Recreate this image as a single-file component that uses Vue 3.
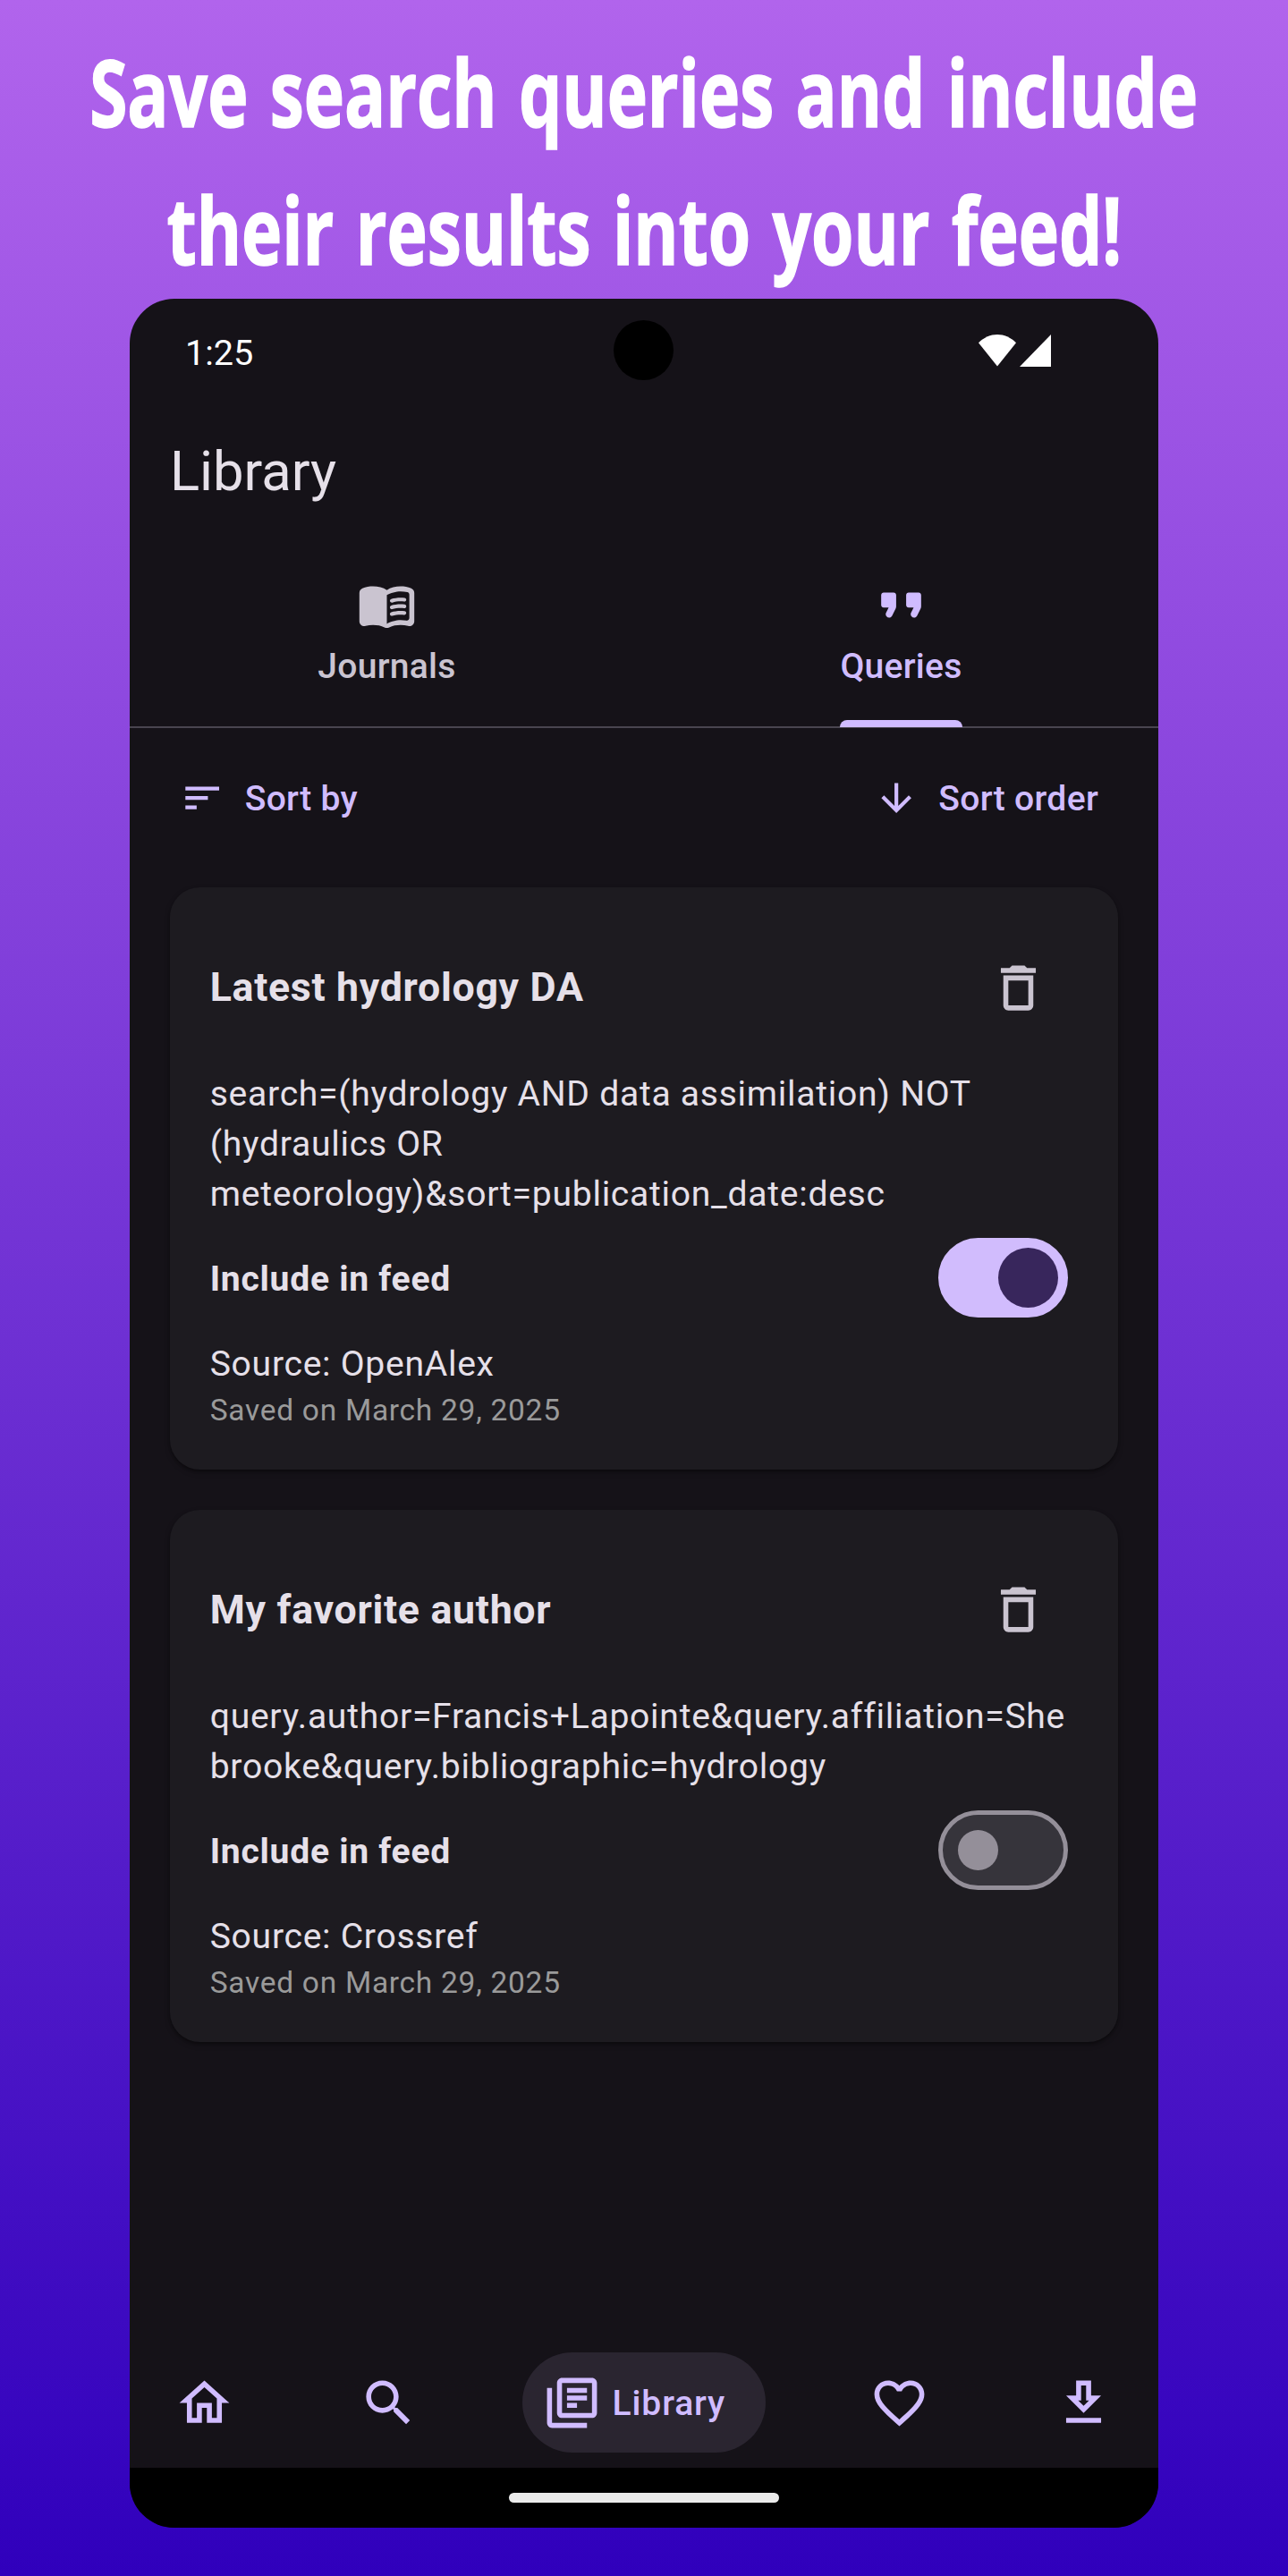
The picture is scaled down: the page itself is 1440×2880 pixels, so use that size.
<script setup>
import { ref } from 'vue'

const headline = ['Save search queries and include', 'their results into your feed!']

const queries = ref([
  {
    title: 'Latest hydrology DA',
    lines: [
      'search=(hydrology AND data assimilation) NOT',
      '(hydraulics OR',
      'meteorology)&sort=publication_date:desc',
    ],
    included: true,
    source: 'OpenAlex',
    saved: 'March 29, 2025',
  },
  {
    title: 'My favorite author',
    lines: [
      'query.author=Francis+Lapointe&query.affiliation=She',
      'brooke&query.bibliographic=hydrology',
    ],
    included: false,
    source: 'Crossref',
    saved: 'March 29, 2025',
  },
])

const nav = [
  {
    name: 'Home',
    path: 'M12 5.69l5 4.5V18h-2v-6H9v6H7v-7.81l5-4.5M12 3L2 12h3v8h6v-6h2v6h6v-8h3L12 3z',
  },
  {
    name: 'Search',
    path: 'M15.5 14h-.79l-.28-.27C15.41 12.59 16 11.11 16 9.5 16 5.91 13.09 3 9.5 3S3 5.91 3 9.5 5.91 16 9.5 16c1.61 0 3.09-.59 4.23-1.57l.27.28v.79l5 4.99L20.49 19l-4.99-5zm-6 0C7.01 14 5 11.99 5 9.5S7.01 5 9.5 5 14 7.01 14 9.5 11.99 14 9.5 14z',
  },
  {
    name: 'Library',
    active: true,
    path: 'M4 6H2v14c0 1.1.9 2 2 2h14v-2H4V6zm16-4H8c-1.1 0-2 .9-2 2v12c0 1.1.9 2 2 2h12c1.1 0 2-.9 2-2V4c0-1.1-.9-2-2-2zm0 14H8V4h12v12zM10 9h8v2h-8zm0 3h4v2h-4zm0-6h8v2h-8z',
  },
  {
    name: 'Favorites',
    path: 'M16.5 3c-1.74 0-3.41.81-4.5 2.09C10.91 3.81 9.24 3 7.5 3 4.42 3 2 5.42 2 8.5c0 3.78 3.4 6.86 8.55 11.54L12 21.35l1.45-1.32C18.6 15.36 22 12.28 22 8.5 22 5.42 19.58 3 16.5 3zm-4.4 15.55l-.1.1-.1-.1C7.14 14.24 4 11.39 4 8.5 4 6.5 5.5 5 7.5 5c1.54 0 3.04.99 3.57 2.36h1.87C13.46 5.99 14.96 5 16.5 5c2 0 3.5 1.5 3.5 3.5 0 2.89-3.14 5.74-7.9 10.05z',
  },
  {
    name: 'Downloads',
    path: 'M13 5v6h1.17L12 13.17 9.83 11H11V5h2m2-2H9v6H5l7 7 7-7h-4V3zm4 15H5v2h14v-2z',
  },
]
</script>

<template>
  <div class="page">
    <h1 class="headline">
      <span v-for="line in headline" :key="line" class="headline-line">{{ line }}</span>
    </h1>

    <div class="phone">
      <div class="status">
        <span class="time">1:25</span>
        <span class="camera"></span>
        <svg class="signal" viewBox="0 0 82 36">
          <path d="M0 9.3C12-3.1 30-3.1 42 9.3L21 35.5Z" />
          <path d="M81 0V36H46Z" />
        </svg>
      </div>

      <div class="appbar">Library</div>

      <div class="tabs">
        <div class="tab">
          <svg class="icon" viewBox="0 0 24 24">
            <path d="M17.5 4.5c-1.95 0-4.05.4-5.5 1.5-1.45-1.1-3.55-1.5-5.5-1.5-1.45 0-2.99.22-4.28.79C1.49 5.62 1 6.33 1 7.14v11.28c0 1.3 1.22 2.26 2.48 1.94.98-.25 2.02-.36 3.02-.36 1.56 0 3.22.26 4.56.92.6.3 1.28.3 1.87 0 1.34-.67 3-.92 4.56-.92 1 0 2.04.11 3.02.36 1.26.33 2.48-.63 2.48-1.94V7.14c0-.81-.49-1.52-1.22-1.85-1.28-.57-2.82-.79-4.27-.79zM21 17.23c0 .63-.58 1.09-1.2.98-.75-.14-1.53-.2-2.3-.2-1.7 0-4.15.65-5.5 1.5V8c1.35-.85 3.8-1.5 5.5-1.5.92 0 1.83.09 2.7.28.46.1.8.51.8.98v9.47z" />
            <path d="M13.98 11.01c-.32 0-.61-.2-.71-.52-.13-.39.09-.82.48-.94 1.54-.5 3.53-.66 5.36-.45.41.05.71.42.66.83-.05.41-.42.71-.83.66-1.62-.19-3.39-.04-4.73.39-.08.01-.16.03-.23.03z" />
            <path d="M13.98 13.67c-.32 0-.61-.2-.71-.52-.13-.39.09-.82.48-.94 1.53-.5 3.53-.66 5.36-.45.41.05.71.42.66.83-.05.41-.42.71-.83.66-1.62-.19-3.39-.04-4.73.39-.08.02-.16.03-.23.03z" />
            <path d="M13.98 16.33c-.32 0-.61-.2-.71-.52-.13-.39.09-.82.48-.94 1.53-.5 3.53-.66 5.36-.45.41.05.71.42.66.83-.05.41-.42.7-.83.66-1.62-.19-3.39-.04-4.73.39-.08.02-.16.03-.23.03z" />
          </svg>
          <span class="tab-label">Journals</span>
        </div>
        <div class="tab selected">
          <svg class="icon" viewBox="0 0 24 24">
            <path d="M7.17 17c.51 0 .98-.29 1.2-.74l1.42-2.84c.14-.28.21-.58.21-.89V8c0-.55-.45-1-1-1H5c-.55 0-1 .45-1 1v4c0 .55.45 1 1 1h2l-1.03 2.06c-.45.89.2 1.94 1.2 1.94zm10 0c.51 0 .98-.29 1.2-.74l1.42-2.84c.14-.28.21-.58.21-.89V8c0-.55-.45-1-1-1h-4c-.55 0-1 .45-1 1v4c0 .55.45 1 1 1h2l-1.03 2.06c-.45.89.2 1.94 1.2 1.94z" />
          </svg>
          <span class="tab-label">Queries</span>
        </div>
      </div>

      <div class="sortbar">
        <div class="sort">
          <svg class="icon small" viewBox="0 0 24 24"><path d="M3 18h6v-2H3v2zM3 6v2h18V6H3zm0 7h12v-2H3v2z" /></svg>
          <span class="sort-label">Sort by</span>
        </div>
        <div class="sort">
          <svg class="icon small" viewBox="0 0 24 24"><path d="M20 12l-1.41-1.41L13 16.17V4h-2v12.17l-5.58-5.59L4 12l8 8 8-8z" /></svg>
          <span class="sort-label">Sort order</span>
        </div>
      </div>

      <div class="cards">
        <div v-for="q in queries" :key="q.title" class="card">
          <div class="row">
            <span class="title">{{ q.title }}</span>
            <div class="delete">
              <svg class="icon" viewBox="0 0 24 24"><path d="M6 19c0 1.1.9 2 2 2h8c1.1 0 2-.9 2-2V7H6v12zM8 9h8v10H8V9zm7.5-5l-1-1h-5l-1 1H5v2h14V4z" /></svg>
            </div>
          </div>
          <div class="query">
            <div v-for="line in q.lines" :key="line">{{ line }}</div>
          </div>
          <div class="row">
            <span class="include">Include in feed</span>
            <div class="switch" :class="{ on: q.included }" @click="q.included = !q.included">
              <span class="knob"></span>
            </div>
          </div>
          <div class="source">Source: {{ q.source }}</div>
          <div class="saved">Saved on {{ q.saved }}</div>
        </div>
      </div>

      <div class="nav">
        <div v-for="item in nav" :key="item.name" class="nav-item" :class="{ active: item.active }">
          <svg class="icon" viewBox="0 0 24 24"><path :d="item.path" /></svg>
          <span v-if="item.active" class="nav-label">{{ item.name }}</span>
        </div>
      </div>

      <div class="gesture"><span class="handle"></span></div>
    </div>
  </div>
</template>

<style>
body {
  margin: 0;
}
</style>

<style scoped>
.page {
  width: 1440px;
  height: 2880px;
  overflow: hidden;
  box-sizing: border-box;
  padding-top: 25px;
  display: flex;
  flex-direction: column;
  align-items: center;
  background: linear-gradient(#b164ec, #3000bc);
  font-family: Roboto, sans-serif;
}
.headline {
  margin: 0;
  height: 309px;
  display: flex;
  flex-direction: column;
  align-items: center;
  font: 700 104px/153.7px "Open Sans", sans-serif;
  color: #fff;
}
.headline-line {
  display: block;
  white-space: nowrap;
  word-spacing: 6px;
  transform: scaleX(0.736);
  -webkit-text-stroke: 1.6px #fff;
}
.phone {
  width: 1150px;
  height: 2492px;
  flex: none;
  border-radius: 50px;
  overflow: hidden;
  background: #151218;
  display: flex;
  flex-direction: column;
}
.icon {
  width: 67px;
  height: 67px;
  flex: none;
  display: block;
  fill: currentColor;
}
.icon.small {
  width: 50.3px;
  height: 50.3px;
}
.status {
  height: 115px;
  flex: none;
  display: grid;
  grid-template-columns: 540.7px 67px 1fr;
  align-items: center;
}
.time {
  padding: 7px 0 0 62px;
  font-size: 39.6px;
  line-height: 48px;
  color: #fff;
}
.camera {
  width: 67px;
  height: 67px;
  border-radius: 50%;
  background: #000;
}
.signal {
  width: 82px;
  height: 36px;
  margin-right: 119px;
  justify-self: end;
  fill: #fff;
}
.appbar {
  height: 157px;
  flex: none;
  padding-left: 45px;
  font-size: 61.5px;
  line-height: 157px;
  color: #e6e0e9;
}
.tabs {
  height: 207.5px;
  flex: none;
  display: flex;
  border-bottom: 2.5px solid #49454f;
  box-sizing: border-box;
}
.tab {
  flex: 1;
  display: flex;
  flex-direction: column;
  align-items: center;
  padding-top: 36.7px;
  color: #cac4d0;
}
.tab-label {
  position: relative;
  height: 101.5px;
  font-size: 39.1px;
  font-weight: 500;
  letter-spacing: 0.25px;
  line-height: 70px;
}
.selected {
  color: #d0bcff;
}
.selected .tab-label::after {
  content: '';
  position: absolute;
  left: 0;
  right: 0;
  bottom: -1.5px;
  height: 8px;
  border-radius: 8px 8px 0 0;
  background: #d0bcff;
}
.sortbar {
  height: 178.5px;
  flex: none;
  display: flex;
  justify-content: space-between;
  box-sizing: border-box;
  padding: 53px 67px 0 56px;
  color: #d0bcff;
  font-size: 39.1px;
  font-weight: 500;
  letter-spacing: 0.3px;
}
.sort {
  display: flex;
  align-items: center;
  height: 50.3px;
  gap: 22.4px;
}
.sort-label,
.nav-label,
.include {
  padding-top: 2px;
}
.cards {
  flex: 1;
  display: flex;
  flex-direction: column;
  gap: 45px;
  padding: 0 45px;
}
.card {
  border-radius: 33.5px;
  background: #1d1b20;
  box-shadow: 0 3px 6px rgba(0, 0, 0, 0.25), 0 2px 3px rgba(0, 0, 0, 0.25);
  padding: 45px 44.7px 42.2px;
  color: #e6e0e9;
  font-size: 39.1px;
}
.row {
  height: 134px;
  display: flex;
  align-items: center;
  justify-content: space-between;
}
.title {
  font-size: 44.7px;
  font-weight: 700;
  letter-spacing: 0.7px;
}
.delete {
  width: 134px;
  display: flex;
  justify-content: center;
  color: #cac4d0;
}
.query {
  padding-top: 23.7px;
  margin-bottom: -1px;
  line-height: 56px;
  letter-spacing: 0.73px;
  white-space: nowrap;
}
.include {
  font-weight: 700;
  letter-spacing: 0.72px;
}
.switch {
  width: 145.5px;
  height: 89.4px;
  box-sizing: border-box;
  margin-right: 11px;
  border: 5.6px solid #948f99;
  border-radius: 45px;
  background: #36343b;
  display: flex;
  align-items: center;
  padding: 0 17.3px;
}
.knob {
  width: 44.8px;
  height: 44.8px;
  border-radius: 50%;
  background: #948f99;
}
.switch.on {
  justify-content: flex-end;
  border-color: #d1bcfd;
  background: #d1bcfd;
  padding: 0 6px;
}
.on .knob {
  width: 67px;
  height: 67px;
  background: #38265c;
}
.source {
  padding-top: 1px;
  line-height: 56px;
  letter-spacing: 0.72px;
}
.saved {
  font-size: 33.5px;
  line-height: 48px;
  letter-spacing: 0.72px;
  color: #9a9a9a;
}
.nav {
  height: 129px;
  flex: none;
  display: flex;
  justify-content: space-between;
  align-items: flex-start;
  box-sizing: border-box;
  padding: 0 28px;
}
.nav-item {
  height: 112px;
  box-sizing: border-box;
  padding: 0 22.4px;
  display: flex;
  align-items: center;
  color: #d0bcff;
  font-size: 39.1px;
  font-weight: 500;
  letter-spacing: 0.85px;
}
.nav-item.active {
  width: 272px;
  border-radius: 56px;
  background: #2a2530;
  gap: 11.2px;
}
.gesture {
  height: 67px;
  flex: none;
  display: flex;
  justify-content: center;
  align-items: center;
  background: #000;
}
.handle {
  width: 302px;
  height: 11px;
  border-radius: 5.5px;
  background: #ebebeb;
}
</style>
